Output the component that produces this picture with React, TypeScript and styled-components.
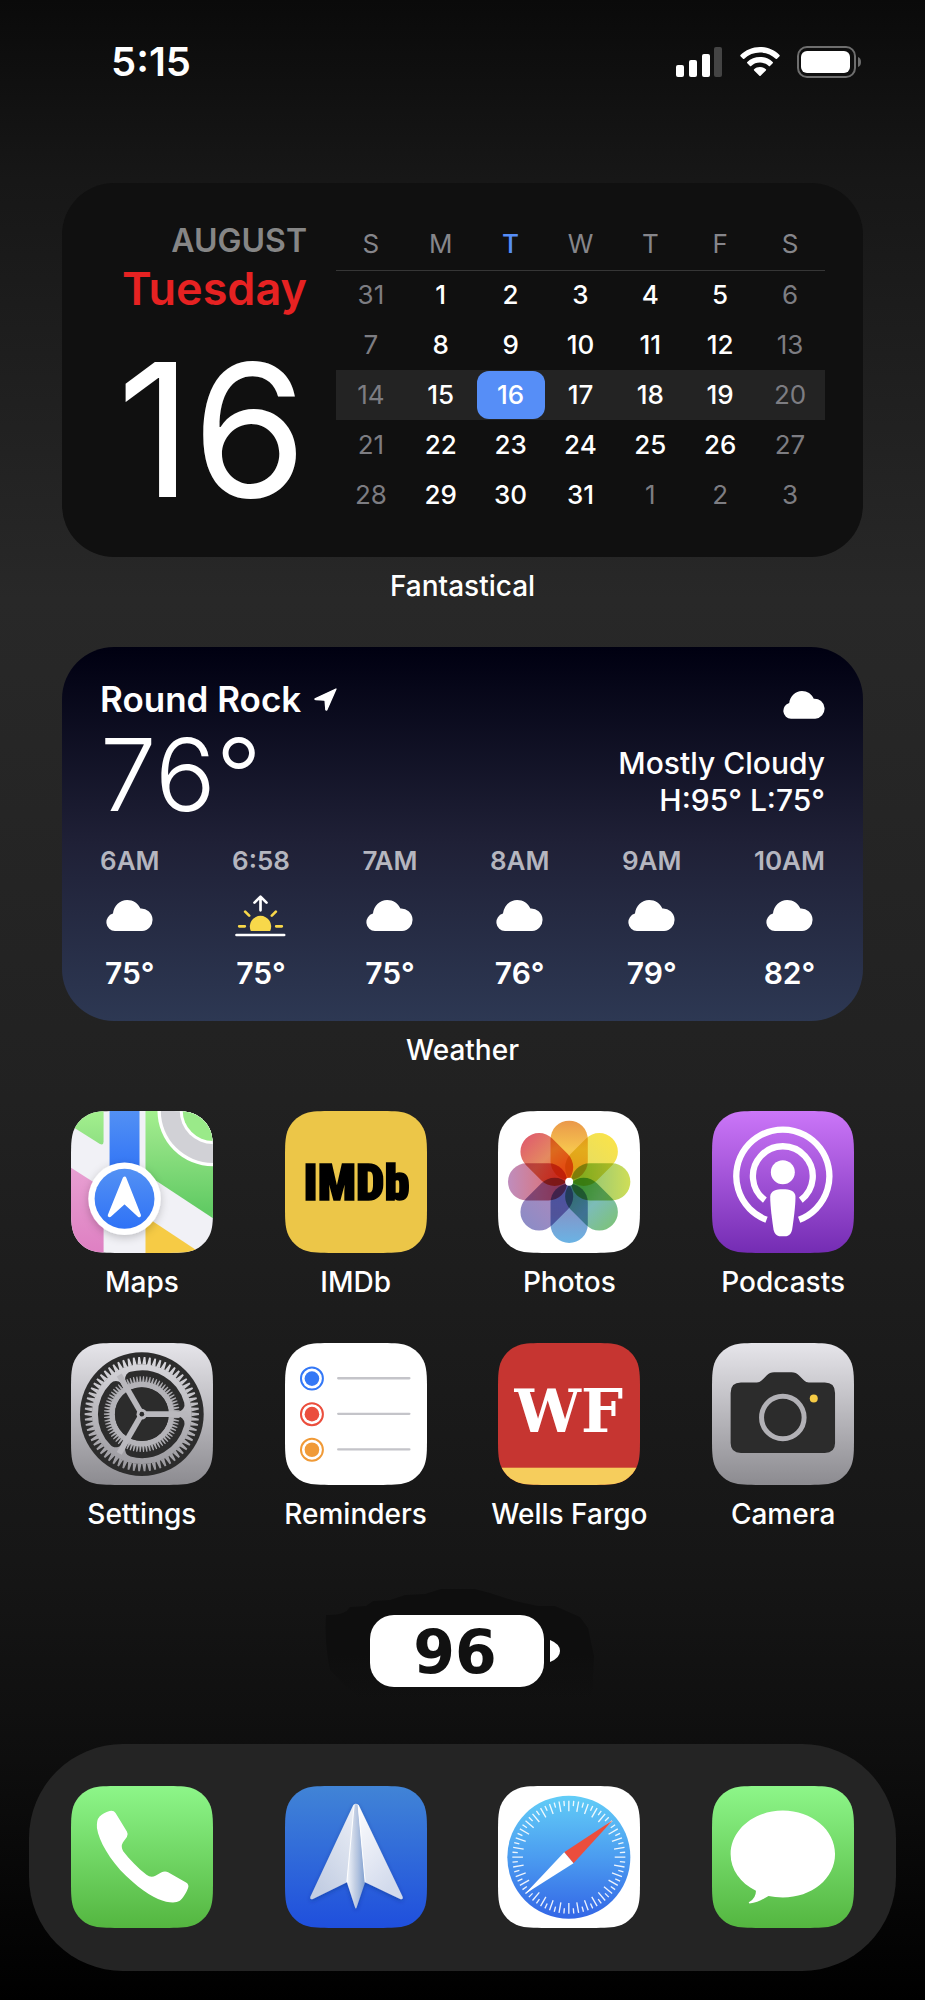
import React from "react";
import styled, { createGlobalStyle } from "styled-components";

const GlobalStyle = createGlobalStyle`
  *, *::before, *::after { box-sizing: border-box; }
  html, body { margin: 0; background: #000; }
  body {
    font-family: Inter, Roboto, "Liberation Sans", sans-serif;
    color: #fff;
    -webkit-font-smoothing: antialiased;
  }
  a { color: inherit; text-decoration: none; }
  svg { display: block; }
`;

const Screen = styled.main`
  min-height: 100vh;
  display: flex;
  flex-direction: column;
  padding-bottom: 29px;
  background: linear-gradient(
    180deg,
    #0a0a0a 0%,
    #171717 9%,
    #282828 30%,
    #212121 55%,
    #161616 78%,
    #0e0e0e 88%,
    #000 100%
  );
`;

const StatusBar = styled.header`
  height: 123px;
  padding: 0 63px 0 111px;
  display: flex;
  align-items: center;
  justify-content: space-between;
`;

const Clock = styled.time`
  font-size: 40px;
  line-height: 48px;
  font-weight: 600;
`;

const StatusIcons = styled.div`
  display: flex;
  align-items: center;
  gap: 17px;
`;

const WidgetList = styled.section`
  margin: 60px 62px 45px;
  display: flex;
  flex-direction: column;
  gap: 45px;
`;

const Figure = styled.figure`
  margin: 0;
  display: flex;
  flex-direction: column;
  gap: 13px;
`;

const Caption = styled.figcaption`
  font-size: 28px;
  line-height: 32px;
  font-weight: 500;
  text-align: center;
`;

const Card = styled.div`
  min-height: 374px;
  border-radius: 52px;
`;

const CalendarCard = styled(Card)`
  background: #101010;
  padding: 35px 38px;
  display: grid;
  grid-template-columns: 207fr 489fr;
  gap: 29px;
`;

const Today = styled.div`
  padding-top: 3px;
  text-align: right;
`;

const MonthName = styled.div`
  font-size: 32px;
  line-height: 40px;
  font-weight: 600;
  color: #868686;
`;

const DayName = styled.div`
  font-size: 45px;
  line-height: 56px;
  font-weight: 600;
  color: #e62222;
`;

const DayNumber = styled.div`
  margin-top: 23px;
  font-size: 185px;
  line-height: 180px;
  font-weight: 400;
`;

const MonthTable = styled.table`
  width: 100%;
  table-layout: fixed;
  border-collapse: collapse;
  align-self: start;
  font-size: 26px;
  line-height: 32px;
  text-align: center;
`;

const WeekdayCell = styled.th<{ $today?: boolean }>`
  height: 52px;
  padding: 0;
  font-weight: ${(p) => (p.$today ? 500 : 400)};
  color: ${(p) => (p.$today ? "#568ef7" : "#86868b")};
  border-bottom: 1px solid #363636;
`;

const WeekRow = styled.tr<{ $current?: boolean }>`
  background: ${(p) => (p.$current ? "#232323" : "transparent")};
`;

const DayCell = styled.td<{ $muted?: boolean }>`
  height: 50px;
  padding: 0 1px;
  font-weight: ${(p) => (p.$muted ? 400 : 500)};
  color: ${(p) => (p.$muted ? "#7d7d82" : "#fff")};
`;

const SelectedDay = styled.span`
  display: block;
  line-height: 48px;
  border-radius: 12px;
  background: #568ef7;
`;

const WeatherCard = styled(Card)`
  padding: 32px 38px 30px;
  background: linear-gradient(180deg, #000011 0%, #1f2036 52%, #2d3853 100%);
`;

const Current = styled.div`
  display: flex;
  justify-content: space-between;
`;

const Place = styled.div`
  display: flex;
  align-items: center;
  gap: 13px;
  font-size: 35px;
  line-height: 40px;
  font-weight: 600;
`;

const Temperature = styled.div`
  font-size: 101px;
  line-height: 110px;
  font-weight: 300;
`;

const Conditions = styled.div`
  padding-top: 12px;
  display: flex;
  flex-direction: column;
  align-items: flex-end;
  font-size: 30px;
  line-height: 37px;
  font-weight: 500;
`;

const ConditionIcon = styled.div`
  margin-bottom: 26px;
`;

const Hours = styled.ul`
  list-style: none;
  margin: 16px 0 0;
  padding: 0;
  display: flex;
  justify-content: space-between;
`;

const Hour = styled.li`
  display: flex;
  flex-direction: column;
  align-items: center;
  gap: 18px;
`;

const HourTime = styled.span`
  font-size: 26px;
  line-height: 32px;
  font-weight: 600;
  color: #b5b6bf;
`;

const HourIcon = styled.span`
  height: 42px;
  display: flex;
  align-items: center;
`;

const HourTemp = styled.span`
  font-size: 30px;
  line-height: 36px;
  font-weight: 600;
`;

const AppGrid = styled.nav`
  margin: 0 35px;
  display: grid;
  grid-template-columns: repeat(4, 1fr);
  row-gap: 45px;
`;

const AppLink = styled.a`
  display: flex;
  flex-direction: column;
  align-items: center;
  gap: 13px;
  font-size: 28px;
  line-height: 32px;
  font-weight: 500;
  white-space: nowrap;
`;

const TileSvg = styled.svg`
  width: 142px;
  height: 142px;
`;

const BatteryWidget = styled.div`
  margin: 40px 0 24px;
  display: flex;
  justify-content: center;
`;

const Dock = styled.nav`
  margin: auto 29px 0;
  padding: 42px 6px 43px;
  border-radius: 94px;
  background: #242424;
  display: grid;
  grid-template-columns: repeat(4, 1fr);
`;

/* ---------- drawings ---------- */

function squircle(x: number, y: number, s: number, r: number) {
  const a = 1.528665 * r, b = 1.088493 * r, c = 0.868407 * r;
  const d = 0.631494 * r, e = 0.074911 * r, f = 0.372824 * r, g = 0.16906 * r;
  const X = x + s, Y = y + s;
  return [
    `M${x + a} ${y}H${X - a}`,
    `C${X - b} ${y} ${X - c} ${y} ${X - d} ${y + e}`,
    `C${X - f} ${y + g} ${X - g} ${y + f} ${X - e} ${y + d}`,
    `C${X} ${y + c} ${X} ${y + b} ${X} ${y + a}V${Y - a}`,
    `C${X} ${Y - b} ${X} ${Y - c} ${X - e} ${Y - d}`,
    `C${X - g} ${Y - f} ${X - f} ${Y - g} ${X - d} ${Y - e}`,
    `C${X - c} ${Y} ${X - b} ${Y} ${X - a} ${Y}H${x + a}`,
    `C${x + b} ${Y} ${x + c} ${Y} ${x + d} ${Y - e}`,
    `C${x + f} ${Y - g} ${x + g} ${Y - f} ${x + e} ${Y - d}`,
    `C${x} ${Y - c} ${x} ${Y - b} ${x} ${Y - a}V${y + a}`,
    `C${x} ${y + b} ${x} ${y + c} ${x + e} ${y + d}`,
    `C${x + g} ${y + f} ${x + f} ${y + g} ${x + d} ${y + e}`,
    `C${x + c} ${y} ${x + b} ${y} ${x + a} ${y}Z`,
  ].join("");
}

type TileProps = {
  id: string;
  x: number;
  y: number;
  from: string;
  to?: string;
  children: React.ReactNode;
};

function Tile({ id, x, y, from, to = from, children }: TileProps) {
  return (
    <TileSvg viewBox={`${x} ${y} 427 427`} aria-hidden="true">
      <defs>
        <clipPath id={`${id}-clip`}>
          <path d={squircle(x, y, 427, 96)} />
        </clipPath>
        <linearGradient id={`${id}-bg`} x1="0" y1="0" x2="0" y2="1">
          <stop offset="0" stopColor={from} />
          <stop offset="1" stopColor={to} />
        </linearGradient>
      </defs>
      <g clipPath={`url(#${id}-clip)`}>
        <rect x={x} y={y} width="427" height="427" fill={`url(#${id}-bg)`} />
        {children}
      </g>
    </TileSvg>
  );
}

const MapsIcon = () => (
  <Tile id="maps" x={64} y={64} from="#f1f1f6">
    <defs>
      <linearGradient id="maps-green" gradientUnits="userSpaceOnUse" x1="0" y1="64" x2="0" y2="360">
        <stop offset="0" stopColor="#a3f08e" />
        <stop offset="0.3" stopColor="#92e284" />
        <stop offset="1" stopColor="#62cb64" />
      </linearGradient>
      <linearGradient id="maps-blue" x1="0" y1="0" x2="0" y2="1">
        <stop offset="0" stopColor="#5391f4" />
        <stop offset="1" stopColor="#2f72f6" />
      </linearGradient>
      <linearGradient id="maps-pink" x1="0" y1="0" x2="0" y2="1">
        <stop offset="0" stopColor="#e8a0d2" />
        <stop offset="1" stopColor="#de7fc2" />
      </linearGradient>
      <filter id="maps-shadow" x="-30%" y="-30%" width="160%" height="160%">
        <feDropShadow dx="0" dy="8" stdDeviation="12" floodColor="#000" floodOpacity="0.22" />
      </filter>
    </defs>
    <path d="M60 60H162V156Q162 168 151 163L60 106Z" fill="url(#maps-green)" />
    <path d="M288 60H495V389L288 253Z" fill="url(#maps-green)" />
    <circle cx="491" cy="63" r="167" fill="#fff" />
    <circle cx="491" cy="63" r="157" fill="#d1d1d6" />
    <circle cx="491" cy="63" r="100" fill="#fff" />
    <circle cx="491" cy="63" r="91" fill="#9aea89" />
    <path d="M60 232L162 297V495H60Z" fill="url(#maps-pink)" />
    <path d="M288 381L460 495H288Z" fill="#f6cb45" />
    <rect x="180" y="60" width="90" height="200" fill="url(#maps-blue)" />
    <circle cx="225" cy="328" r="109" fill="#fff" filter="url(#maps-shadow)" />
    <circle cx="225" cy="328" r="90" fill="url(#maps-blue)" />
    <path
      d="M225 267L180 378L225 337L269 378Z"
      fill="#fff"
      stroke="#fff"
      strokeWidth="11"
      strokeLinejoin="round"
    />
  </Tile>
);

const ImdbIcon = () => (
  <Tile id="imdb" x={704} y={64} from="#ecc648">
    <text
      x="919"
      y="332"
      textAnchor="middle"
      fontFamily='"Roboto Condensed", "Open Sans Condensed", Roboto, sans-serif'
      fontWeight="900"
      fontSize="152"
      fill="#000"
      stroke="#000"
      strokeWidth="5"
    >
      IMDb
    </text>
  </Tile>
);

/* outer, middle and inner colour of each petal, clockwise from the top */
const PETALS: [string, string, string][] = [
  ["#ea984a", "#f6c44e", "#f6b848"],
  ["#f9e34b", "#ecdf5a", "#ecdc50"],
  ["#cfde57", "#a8ce6c", "#90c860"],
  ["#7dc27e", "#7cbcb8", "#6cb890"],
  ["#6ab3e4", "#8099cc", "#7a9ad0"],
  ["#8d8cc6", "#a08ac0", "#a088c4"],
  ["#bf8dbd", "#d27c90", "#d86878"],
  ["#e0606c", "#e48a60", "#ec6a40"],
];

const PhotosIcon = () => (
  <Tile id="photos" x={84} y={64} from="#fff">
    <defs>
      {PETALS.map(([outer, middle, inner], i) => (
        <linearGradient key={i} id={`petal-${i}`} x1="0" y1="0" x2="0" y2="1">
          <stop offset="0" stopColor={outer} />
          <stop offset="0.48" stopColor={middle} />
          <stop offset="0.8" stopColor={inner} />
        </linearGradient>
      ))}
    </defs>
    {PETALS.map((_, i) => (
      <rect
        key={i}
        x="242"
        y="93"
        width="112"
        height="178"
        rx="56"
        fill={`url(#petal-${i})`}
        transform={`rotate(${i * 45} 298 277)`}
        style={{ mixBlendMode: "multiply" }}
      />
    ))}
    <circle cx="298" cy="277" r="12" fill="#fff" />
  </Tile>
);

const PodcastsIcon = () => (
  <Tile id="podcasts" x={725} y={64} from="#cb76f8" to="#742cb3">
    <g fill="none" stroke="#fff" strokeWidth="19">
      <path d="M889 391A140 140 0 1 1 987 391" />
      <path d="M884 332A90 90 0 1 1 992 332" />
    </g>
    <circle cx="938" cy="248" r="36" fill="#fff" />
    <path
      d="M900 322C900 304 918 299 938 299S976 304 976 322C976 350 970 395 966 420C963 436 954 441 938 441S913 436 910 420C906 395 900 350 900 322Z"
      fill="#fff"
    />
  </Tile>
);

const polar = (r: number, deg: number) => {
  const a = (deg * Math.PI) / 180;
  return `${(277 + r * Math.cos(a)).toFixed(2)} ${(284 + r * Math.sin(a)).toFixed(2)}`;
};

function teeth(count: number, inner: number, outer: number) {
  const step = 360 / count;
  return Array.from({ length: count }, (_, i) => {
    const a = i * step;
    return `M${polar(inner, a - step * 0.42)}L${polar(outer, a - step * 0.16)}L${polar(outer, a + step * 0.16)}L${polar(inner, a + step * 0.42)}Z`;
  }).join("");
}

const SettingsIcon = () => (
  <Tile id="settings" x={64} y={70} from="#e6e5ea" to="#8c8b90">
    <defs>
      <linearGradient id="gear" gradientUnits="userSpaceOnUse" x1="0" y1="110" x2="0" y2="460">
        <stop offset="0" stopColor="#dad9de" />
        <stop offset="1" stopColor="#98979c" />
      </linearGradient>
    </defs>
    <circle cx="277" cy="284" r="186" fill="#2c2c2c" />
    <path d={teeth(66, 149, 172)} fill="url(#gear)" />
    <circle cx="277" cy="284" r="150" fill="url(#gear)" />
    {[0, 120, 240].map((a) => (
      <path
        key={a}
        d={`M${polar(36, a + 60)}L${polar(110, a + 15)}A110 110 0 0 1 ${polar(110, a + 105)}Z`}
        fill="#2c2c2c"
        stroke="#2c2c2c"
        strokeWidth="44"
        strokeLinejoin="round"
      />
    ))}
    <path d={teeth(70, 96, 114)} fill="#adacb1" />
    <circle cx="277" cy="284" r="89" fill="none" stroke="#b4b3b8" strokeWidth="17" />
    <circle cx="277" cy="284" r="81" fill="#2c2c2c" />
    {[0, 120, 240].map((a) => (
      <path key={a} d={`M277 284L${polar(136, a)}`} stroke="#b9b8bd" strokeWidth="17" />
    ))}
    <circle cx="277" cy="284" r="16" fill="#b9b8bd" />
    <circle cx="277" cy="284" r="7" fill="#2c2c2c" />
  </Tile>
);

const RemindersIcon = () => (
  <Tile id="reminders" x={704} y={70} from="#fff">
    {["#3478f6", "#eb4e3d", "#f09a37"].map((color, i) => (
      <g key={color} transform={`translate(0 ${i * 107})`}>
        <circle cx="785" cy="177" r="33" fill="none" stroke={color} strokeWidth="6" />
        <circle cx="785" cy="177" r="22" fill={color} />
        <path d="M864 176H1078" stroke="#c4c4c9" strokeWidth="7" strokeLinecap="round" />
      </g>
    ))}
  </Tile>
);

const WellsFargoIcon = () => (
  <Tile id="wells" x={84} y={70} from="#c63531">
    <rect x="84" y="445" width="427" height="60" fill="#f6cd5c" />
    <text
      x="297"
      y="338"
      textAnchor="middle"
      fontFamily='"DejaVu Serif", serif'
      fontWeight="700"
      fontSize="178"
      fill="#fff"
    >
      WF
    </text>
  </Tile>
);

const CameraIcon = () => (
  <Tile id="camera" x={725} y={70} from="#e6e5ea" to="#8c8b90">
    <path
      d="M812 189H860Q868 189 874 183L890 167Q898 158 912 158H964Q978 158 986 167L1002 183Q1008 189 1016 189H1064Q1095 189 1095 220V371Q1095 401 1064 401H812Q781 401 781 371V220Q781 189 812 189Z"
      fill="#2c2c2c"
    />
    <circle cx="938" cy="294" r="64" fill="none" stroke="#b2b1b6" strokeWidth="15" />
    <circle cx="1031" cy="237" r="12" fill="#f6cb45" />
  </Tile>
);

const PhoneIcon = () => (
  <Tile id="phone" x={184} y={199} from="#8df689" to="#54b640">
    <path
      d="M300 274Q312 271 318 280L352 336Q357 344 352 352L340 369Q333 381 341 395C360 420 385 445 411 466Q424 476 438 469L455 459Q466 453 476 458L530 489Q540 495 536 506C530 522 520 538 510 545Q498 552 470 547C440 541 400 518 350 470C300 420 268 365 262 325Q260 302 270 291C278 283 288 277 300 274Z"
      fill="#fff"
    />
  </Tile>
);

const SparkIcon = () => (
  <Tile id="spark" x={824} y={199} from="#4184d6" to="#1f4fdd">
    <defs>
      <linearGradient id="wing-left" x1="1" y1="0" x2="0.4" y2="1">
        <stop offset="0" stopColor="#eef1f7" />
        <stop offset="1" stopColor="#c3cee3" />
      </linearGradient>
      <linearGradient id="wing-right" x1="0" y1="0" x2="0.5" y2="1">
        <stop offset="0" stopColor="#fff" />
        <stop offset="1" stopColor="#d2daec" />
      </linearGradient>
      <linearGradient id="fold" x1="0" y1="0" x2="1" y2="0">
        <stop offset="0" stopColor="#f3f6fb" />
        <stop offset="0.45" stopColor="#c2cee3" />
        <stop offset="0.6" stopColor="#b2c3df" />
        <stop offset="1" stopColor="#7f9fd0" />
      </linearGradient>
      <filter id="spark-shadow" x="-20%" y="-20%" width="140%" height="140%">
        <feDropShadow dx="0" dy="5" stdDeviation="6" floodColor="#0a2a80" floodOpacity="0.45" />
      </filter>
    </defs>
    <g filter="url(#spark-shadow)">
      <path d="M1037 252Q1031 252 1028 259L900 533Q898 542 908 539L1012 488L1040 270Z" fill="url(#wing-left)" />
      <path d="M1037 252Q1043 252 1047 259L1178 533Q1180 542 1170 539L1063 488L1036 270Z" fill="url(#wing-right)" />
      <path d="M1032 254H1043L1065 488L1039 565Q1037 570 1035 565L1010 488Z" fill="url(#fold)" />
      <path d="M1032 256L1010 488M1044 256L1065 488" stroke="#fff" strokeWidth="3" fill="none" />
    </g>
  </Tile>
);

const SafariIcon = () => (
  <Tile id="safari" x={115} y={199} from="#fff">
    <defs>
      <linearGradient id="dial" x1="0" y1="0" x2="0" y2="1">
        <stop offset="0" stopColor="#62cdf7" />
        <stop offset="0.5" stopColor="#4b9cf0" />
        <stop offset="1" stopColor="#3366e6" />
      </linearGradient>
    </defs>
    <circle cx="328" cy="413" r="185" fill="url(#dial)" />
    {Array.from({ length: 72 }, (_, i) => (
      <path
        key={i}
        d={i % 2 ? "M328 243V259" : "M328 243V275"}
        stroke="#fff"
        strokeOpacity="0.9"
        strokeWidth="4"
        transform={`rotate(${i * 5} 328 413)`}
      />
    ))}
    <path d="M460 302L314 398L342 431Z" fill="#eb4e3d" />
    <path d="M196 524L314 398L342 431Z" fill="#fff" />
  </Tile>
);

const MessagesIcon = () => (
  <Tile id="messages" x={755} y={199} from="#8df689" to="#54b640">
    <path
      d="M968 273C1055 273 1125 331 1125 404S1055 534 968 534Q944 534 925 530C910 538 890 552 868 552Q863 551 868 547Q888 534 887 514C840 490 811 450 811 404C811 331 881 273 968 273Z"
      fill="#fff"
    />
  </Tile>
);

const CloudIcon = ({ width }: { width: number }) => (
  <svg width={width} viewBox="170 812 142 94" fill="#fff" aria-hidden="true">
    <path d="M197 906A27 27 0 0 1 191 853C194 829 212 812 234 812C252 812 267 822 274 838A34 34 0 1 1 279 906Z" />
  </svg>
);

const SunriseIcon = () => (
  <svg width="51" height="42" viewBox="559 796 152 126" fill="none" strokeLinecap="round" aria-hidden="true">
    <path d="M563 916H706M635 842V802M617 819L635 801L653 819" stroke="#fff" strokeWidth="8" strokeLinejoin="round" />
    <path d="M571 890H588M682 890H699M589 846L601 858M681 846L669 858" stroke="#f8d84a" strokeWidth="8" />
    <path d="M606 904A32 32 0 1 1 664 904Z" fill="#f8d84a" />
  </svg>
);

const LocationArrow = () => (
  <svg width="23" height="23" viewBox="791 173 68 68" aria-hidden="true">
    <path
      d="M856 176L794 205Q793 207 796 207L822 209Q824 210 824 212L826 237Q827 239 829 237Z"
      fill="#fff"
      stroke="#fff"
      strokeWidth="4"
      strokeLinejoin="round"
    />
  </svg>
);

const SignalIcon = () => (
  <svg width="47" height="30" viewBox="0 0 47 30" fill="#fff" aria-label="Signal">
    <rect x="0" y="18" width="8" height="12" rx="2" />
    <rect x="13" y="13" width="8" height="17" rx="2" />
    <rect x="26" y="7" width="8" height="23" rx="2" />
    <rect x="38" y="0" width="8" height="30" rx="2" fill="#444" />
  </svg>
);

const WifiIcon = () => (
  <svg width="40" height="30" viewBox="0 0 40 30" aria-label="Wi-Fi">
    <path d="M20 0C27.500 0 34.500 3 39.500 8Q40 8.700 39.500 9.300L37 11.700Q36.300 12.200 35.700 11.700C31.500 7.700 26 5.600 20 5.600S8.500 7.700 4.300 11.700Q3.700 12.200 3 11.700L.5 9.300Q0 8.700 .5 8C5.500 3 12.500 0 20 0Z" fill="#fff" />
    <path d="M20 10C25 10 29.300 11.800 32.700 15Q33.300 15.700 32.700 16.300L30 18.900Q29.400 19.400 28.800 18.900C26.400 16.800 23.400 15.600 20 15.600S13.600 16.800 11.200 18.900Q10.600 19.400 10 18.900L7.300 16.300Q6.700 15.700 7.300 15C10.700 11.800 15 10 20 10Z" fill="#fff" />
    <path d="M20 20C22.400 20 24.300 20.800 25.900 22.200Q26.500 22.800 25.900 23.400L20.600 28.800Q20 29.400 19.400 28.800L14.100 23.400Q13.500 22.800 14.100 22.200C15.700 20.800 17.600 20 20 20Z" fill="#fff" />
  </svg>
);

const BatteryIcon = () => (
  <svg width="65" height="32" viewBox="0 0 65 32" aria-label="Battery">
    <rect x="1" y="1" width="57" height="30" rx="9" fill="none" stroke="#6e6e6e" strokeWidth="2" />
    <rect x="4" y="5" width="49" height="22" rx="6" fill="#fff" />
    <path d="M61 11Q64 12 64 16T61 21Z" fill="#6e6e6e" />
  </svg>
);

const BatteryBadge = () => (
  <svg width="325" height="150" viewBox="0 0 325 150" role="img" aria-label="Battery 96">
    <defs>
      <linearGradient id="smudge" x1="0" y1="0" x2="0" y2="1">
        <stop offset="0" stopColor="#0e0e0e" />
        <stop offset="0.6" stopColor="#0e0e0e" />
        <stop offset="1" stopColor="#0e0e0e" stopOpacity="0" />
      </linearGradient>
    </defs>
    <path
      d="M26 45Q45 46 50 37L66 36L73 31L90 30L105 25L125 24L141 19H175L190 23L215 31L238 36H255L280 47L288 58L294 86L292 130H60L30 100Q24 70 26 45Z"
      fill="url(#smudge)"
    />
    <rect x="70" y="45" width="174" height="72" rx="24" fill="#fff" />
    <path d="M250 70Q260 74 260 81T250 92Z" fill="#fff" />
    <text
      x="155"
      y="103"
      textAnchor="middle"
      fontFamily='"DejaVu Sans", sans-serif'
      fontWeight="700"
      fontSize="60"
      fill="#111"
    >
      96
    </text>
  </svg>
);

/* ---------- data ---------- */

const WEEKDAYS = ["S", "M", "T", "W", "T", "F", "S"];

const WEEKS = [
  [31, 1, 2, 3, 4, 5, 6],
  [7, 8, 9, 10, 11, 12, 13],
  [14, 15, 16, 17, 18, 19, 20],
  [21, 22, 23, 24, 25, 26, 27],
  [28, 29, 30, 31, 1, 2, 3],
];

const HOURS = [
  { time: "6AM", temp: "75°" },
  { time: "6:58", temp: "75°", sunrise: true },
  { time: "7AM", temp: "75°" },
  { time: "8AM", temp: "76°" },
  { time: "9AM", temp: "79°" },
  { time: "10AM", temp: "82°" },
];

const APPS = [
  { name: "Maps", Icon: MapsIcon },
  { name: "IMDb", Icon: ImdbIcon },
  { name: "Photos", Icon: PhotosIcon },
  { name: "Podcasts", Icon: PodcastsIcon },
  { name: "Settings", Icon: SettingsIcon },
  { name: "Reminders", Icon: RemindersIcon },
  { name: "Wells Fargo", Icon: WellsFargoIcon },
  { name: "Camera", Icon: CameraIcon },
];

const DOCK_APPS = [
  { name: "Phone", Icon: PhoneIcon },
  { name: "Mail", Icon: SparkIcon },
  { name: "Safari", Icon: SafariIcon },
  { name: "Messages", Icon: MessagesIcon },
];

const isMuted = (week: number, column: number) =>
  column === 0 || column === 6 || (week === 4 && column > 3);

export default function App() {
  return (
    <>
      <GlobalStyle />
      <Screen>
        <StatusBar>
          <Clock>5:15</Clock>
          <StatusIcons>
            <SignalIcon />
            <WifiIcon />
            <BatteryIcon />
          </StatusIcons>
        </StatusBar>

        <WidgetList>
          <Figure>
            <CalendarCard>
              <Today>
                <MonthName>AUGUST</MonthName>
                <DayName>Tuesday</DayName>
                <DayNumber>16</DayNumber>
              </Today>
              <MonthTable>
                <thead>
                  <tr>
                    {WEEKDAYS.map((d, i) => (
                      <WeekdayCell key={i} scope="col" $today={i === 2}>
                        {d}
                      </WeekdayCell>
                    ))}
                  </tr>
                </thead>
                <tbody>
                  {WEEKS.map((week, w) => (
                    <WeekRow key={w} $current={w === 2}>
                      {week.map((day, c) => (
                        <DayCell key={c} $muted={isMuted(w, c)}>
                          {w === 2 && c === 2 ? <SelectedDay>{day}</SelectedDay> : day}
                        </DayCell>
                      ))}
                    </WeekRow>
                  ))}
                </tbody>
              </MonthTable>
            </CalendarCard>
            <Caption>Fantastical</Caption>
          </Figure>

          <Figure>
            <WeatherCard>
              <Current>
                <div>
                  <Place>
                    Round Rock
                    <LocationArrow />
                  </Place>
                  <Temperature>76°</Temperature>
                </div>
                <Conditions>
                  <ConditionIcon>
                    <CloudIcon width={42} />
                  </ConditionIcon>
                  <span>Mostly Cloudy</span>
                  <span>H:95° L:75°</span>
                </Conditions>
              </Current>
              <Hours>
                {HOURS.map((h) => (
                  <Hour key={h.time}>
                    <HourTime>{h.time}</HourTime>
                    <HourIcon>{h.sunrise ? <SunriseIcon /> : <CloudIcon width={47} />}</HourIcon>
                    <HourTemp>{h.temp}</HourTemp>
                  </Hour>
                ))}
              </Hours>
            </WeatherCard>
            <Caption>Weather</Caption>
          </Figure>
        </WidgetList>

        <AppGrid aria-label="Apps">
          {APPS.map(({ name, Icon }) => (
            <AppLink key={name} href="#">
              <Icon />
              {name}
            </AppLink>
          ))}
        </AppGrid>

        <BatteryWidget>
          <BatteryBadge />
        </BatteryWidget>

        <Dock aria-label="Dock">
          {DOCK_APPS.map(({ name, Icon }) => (
            <AppLink key={name} href="#" aria-label={name}>
              <Icon />
            </AppLink>
          ))}
        </Dock>
      </Screen>
    </>
  );
}
